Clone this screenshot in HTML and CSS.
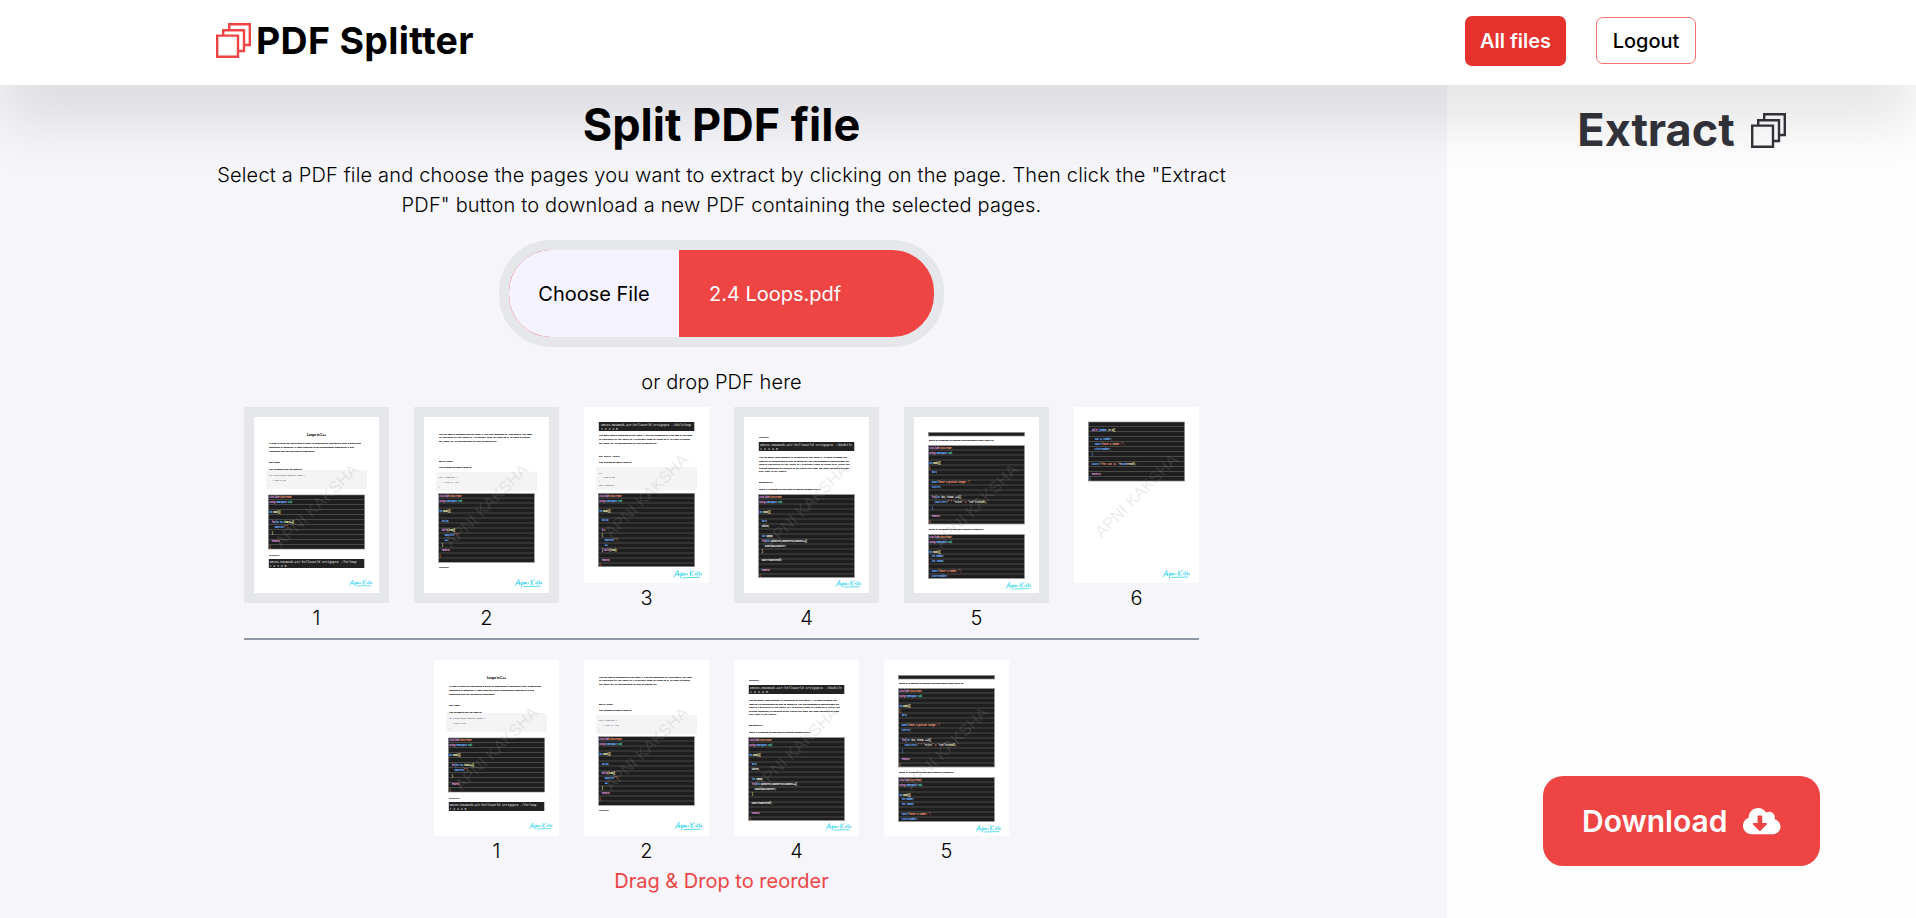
FILE: index.html
```html
<!DOCTYPE html>
<html lang="en">
<head>
<meta charset="utf-8">
<title>PDF Splitter</title>
<link rel="stylesheet" href="styles.css">
</head>
<body>
<svg class="defs" width="0" height="0" aria-hidden="true">
  <defs>
    <pattern id="rows" width="96" height="5" patternUnits="userSpaceOnUse"><rect width="96" height="5" fill="#1e1e1e"/><rect y="4" width="96" height="1" fill="#484848"/></pattern>
    <g id="head">
      <text x=".5" y="3.4" textLength="23"><tspan class="p">#include</tspan><tspan class="o">&lt;iostream&gt;</tspan></text>
      <text x=".5" y="8.4" textLength="24"><tspan class="p">using</tspan> <tspan class="b">namespace</tspan> <tspan class="g">std;</tspan></text>
      <text x=".5" y="18.4" textLength="12"><tspan class="b">int</tspan> <tspan class="y">main(){</tspan></text>
    </g>
    <g id="mark"><text class="mark" transform="translate(27.5 131.5) rotate(-45)" textLength="110">APNI KAKSHA</text></g>
    <g id="sign" class="sign"><path d="M0 7 L4 0 L5 6 M1 4 H6 M7 3 V8 M7 3 Q10 2 9 5 L7 5 M10 5 V3 M11 5 V3 Q13 3 12 5 M14 3 V5 M17 0 V6 M21 0 L17 3 L20 6 M21 4 Q23 2 23 5 M24 1 V5 M26 1 V5 L28 3 V5 M9 7.5 L27 7"/></g>
    <symbol id="page1" viewBox="0 0 125 176">
      <rect width="125" height="176" fill="#fff"/>
      <g class="doc">
        <text class="title" x="53" y="18.7" textLength="19">Loops in C++</text>
        <text x="15" y="27.2" textLength="92">A loop is used for executing a block of statements repeatedly until a particular</text>
        <text x="15" y="31" textLength="85">condition is satisfied. A loop consists of an initialization statement, a test</text>
        <text x="15" y="34.6" textLength="46">condition and an increment statement.</text>
        <text x="15" y="46" textLength="11">For Loop:</text>
        <text x="15" y="53" textLength="33">The syntax of the for loop is:</text>
      </g>
      <rect x="12" y="53" width="101" height="19" fill="#f4f4f4"/>
      <g class="snip"><text x="15" y="59.3" textLength="36">for (initialization; condition; update) {</text><text x="18" y="64.3" textLength="14">// body of loop</text><text x="15" y="68.5">}</text></g>
      <g class="code" transform="translate(14.5 78)">
        <rect width="96" height="54" fill="url(#rows)" stroke="#777" stroke-width=".6"/>
        <use href="#head"/>
        <text x="3" y="28.2" textLength="23"><tspan class="p">for</tspan><tspan class="b">(int i=1;</tspan><tspan class="y">i&lt;=5;i++){</tspan></text>
        <text x="6" y="33" textLength="14"><tspan class="b">cout&lt;&lt;i&lt;&lt;</tspan><tspan class="o">" ";</tspan></text>
        <text class="y" x="3" y="38.5">}</text><text class="p" x="3" y="47" textLength="9">return 0;</text><text class="o" x=".5" y="52.5">}</text>
      </g>
      <g class="doc"><text x="15" y="138.5" textLength="11">Output:</text></g>
      <rect x="14.8" y="142" width="95.5" height="9" fill="#222"/>
      <g class="term"><text x="15.5" y="145.9" textLength="87">URVIs-MacBook-Air:helloworld urvigupta ./forloop</text><text x="15.5" y="150" textLength="17">1 2 3 4 5</text></g>
      <use href="#mark"/><use href="#sign" transform="translate(95.5 163) scale(.8)"/>
    </symbol>
    <symbol id="page2" viewBox="0 0 125 176">
      <rect width="125" height="176" fill="#fff"/>
      <g class="doc">
        <text x="15" y="18" textLength="93">The for loop is initialised by the value 1. The test condition is i less than 5. The loop</text>
        <text x="15" y="21.3" textLength="91">is executed till the value of i is greater than or equal to 5. In each iteration</text>
        <text x="15" y="25.2" textLength="58">the value of i is incremented by one by doing i++.</text>
        <text x="15" y="45.2" textLength="14">while loop:</text>
        <text x="15" y="51.3" textLength="33">The syntax for while loop is:</text>
      </g>
      <rect x="12" y="55" width="101" height="19" fill="#f4f4f4"/>
      <g class="snip"><text x="15" y="61.3" textLength="18">while (condition) {</text><text x="18" y="66.3" textLength="17">// body of loop</text><text x="15" y="70.5">}</text></g>
      <g class="code" transform="translate(14.5 76.5)">
        <rect width="96" height="69" fill="url(#rows)" stroke="#aaa" stroke-width=".8"/>
        <use href="#head"/>
        <text class="b" x="3" y="28" textLength="8">int i=1;</text>
        <text x="3" y="37.5" textLength="14"><tspan class="p">while</tspan><tspan class="y">(i&lt;=5){</tspan></text>
        <text x="6" y="42.5" textLength="14"><tspan class="b">cout&lt;&lt;i&lt;&lt;</tspan><tspan class="o">" ";</tspan></text>
        <text class="b" x="6" y="47.5" textLength="4">i++;</text><text class="y" x="3" y="52.8">}</text><text class="p" x="3" y="57.5" textLength="9">return 0;</text><text class="o" x=".5" y="63">}</text>
      </g>
      <g class="doc"><text x="15" y="151" textLength="10">Output:</text></g>
      <use href="#mark"/><use href="#sign" transform="translate(91 162.5) scale(.95)"/>
    </symbol>
    <symbol id="page3" viewBox="0 0 125 176">
      <rect width="125" height="176" fill="#fff"/>
      <rect x="14.8" y="15" width="95.5" height="9" fill="#222"/>
      <g class="term"><text x="17" y="18.6" textLength="90">URVIs-MacBook-Air:helloworld urvigupta ./whileloop</text><text x="17" y="22.8" textLength="17">1 2 3 4 5</text></g>
      <g class="doc">
        <text x="15" y="29" textLength="93">The while loop is initialised by the value 1. The test condition is i less than 5. The loop</text>
        <text x="15" y="33" textLength="91">is executed till the value of i is greater than or equal to 5. In each iteration</text>
        <text x="15" y="36.5" textLength="58">the value of i is incremented by one by doing i++.</text>
        <text x="15" y="50.3" textLength="21">Do while loop:</text>
        <text x="15" y="56.3" textLength="33">The syntax for while loop is:</text>
      </g>
      <rect x="12" y="60" width="101" height="23" fill="#f4f4f4"/>
      <g class="snip"><text x="15" y="67" textLength="4">do {</text><text x="18" y="71" textLength="13">// body of loop</text><text x="15" y="75">}</text><text x="15" y="79" textLength="16">while (condition);</text></g>
      <g class="code" transform="translate(14.5 86.5)">
        <rect width="96" height="73" fill="url(#rows)" stroke="#777" stroke-width=".6"/>
        <use href="#head"/>
        <text class="b" x="3" y="27.5" textLength="8">int i=1;</text><text class="p" x="3" y="37.5" textLength="4">do</text><text class="y" x="3" y="42.8">{</text>
        <text x="6" y="47.5" textLength="14"><tspan class="b">cout&lt;&lt;i&lt;&lt;</tspan><tspan class="o">" ";</tspan></text>
        <text class="b" x="6" y="52.5" textLength="4">i++;</text><text x="3" y="57" textLength="16">} <tspan class="p">while</tspan><tspan class="y">(i&lt;=5);</tspan></text><text class="p" x="3" y="67" textLength="9">return 0;</text><text class="o" x=".5" y="72">}</text>
      </g>
      <use href="#mark"/><use href="#sign" transform="translate(90 163.5) scale(.97)"/>
    </symbol>
    <symbol id="page4" viewBox="0 0 125 176">
      <rect width="125" height="176" fill="#fff"/>
      <g class="doc"><text x="15" y="21" textLength="10">Output:</text></g>
      <rect x="14.8" y="25" width="95.5" height="9" fill="#222"/>
      <g class="term"><text x="16" y="28.8" textLength="92">URVIs-MacBook-Air:helloworld urvigupta ./dowhile</text><text x="16" y="32.8" textLength="18">1 2 3 4 5</text></g>
      <g class="doc">
        <text x="15" y="41" textLength="88">The do while loop variable is initialised by the value 1, in each iteration the</text>
        <text x="15" y="44.5" textLength="90">value of i is incremented by one by doing i++. The test condition is checked after the</text>
        <text x="15" y="48" textLength="91">loop is executed till the value of i is greater than or equal to 5. Since the</text>
        <text x="15" y="51.7" textLength="90">testing condition is checked at the end of the loop, the loop executes at least</text>
        <text x="15" y="55.2" textLength="28">one time in all cases.</text>
        <text x="15" y="66.2" textLength="14">Examples:</text>
        <text x="15" y="73.2" textLength="62">Ques 1: Program to find sum of natural numbers till n.</text>
      </g>
      <g class="code" transform="translate(14.5 77.5)">
        <rect width="96" height="83" fill="url(#rows)" stroke="#999" stroke-width=".8"/>
        <use href="#head"/>
        <text class="b" x="3" y="27.3" textLength="6">int n;</text><text x="3" y="32.3" textLength="8">cin&gt;&gt;n;</text><text x="3" y="42.3" textLength="12"><tspan class="b">int</tspan> sum=0;</text>
        <text x="3" y="47.3" textLength="46"><tspan class="p">for</tspan>(<tspan class="b">int</tspan> counter=1;counter&lt;=n;counter++){</text>
        <text x="6" y="52.3" textLength="22">sum=sum+counter;</text><text class="y" x="3" y="57.8">}</text><text x="3" y="66.3" textLength="21">cout&lt;&lt;sum&lt;&lt;endl;</text><text class="p" x="3" y="76.3" textLength="9">return 0;</text><text class="o" x=".5" y="82">}</text>
      </g>
      <use href="#mark"/><use href="#sign" transform="translate(92 163.5) scale(.88)"/>
    </symbol>
    <symbol id="page5" viewBox="0 0 125 176">
      <rect width="125" height="176" fill="#fff"/>
      <rect x="14.5" y="15.5" width="96" height="3.5" fill="#1e1e1e" stroke="#888" stroke-width=".7"/>
      <g class="doc"><text x="15" y="24.2" textLength="65">Ques 2: Program to display multiplication table upto 10.</text><text x="15" y="113.2" textLength="55">Ques 3: Program to add only positive numbers.</text></g>
      <g class="code" transform="translate(14.5 28.5)">
        <rect width="96" height="78.5" fill="url(#rows)" stroke="#999" stroke-width=".8"/>
        <use href="#head"/>
        <text class="o" x=".5" y="23.5">{</text><text class="b" x="3" y="27" textLength="6">int n;</text>
        <text x="3" y="37.3" textLength="39"><tspan class="b">cout&lt;&lt;</tspan><tspan class="o">"Enter a positive integer: ";</tspan></text><text class="b" x="3" y="42.3" textLength="10">cin&gt;&gt;n;</text>
        <text x="3" y="52.3" textLength="30"><tspan class="p">for</tspan>(<tspan class="b">int</tspan> i=1; i&lt;=10; ++i){</text><text x="6" y="57.3" textLength="52"><tspan class="b">cout&lt;&lt;n&lt;&lt;</tspan><tspan class="o">" * "</tspan>&lt;&lt;i&lt;&lt;<tspan class="o">" = "</tspan>&lt;&lt;n*i&lt;&lt;<tspan class="y">endl;</tspan></text>
        <text class="b" x="3" y="63">}</text><text class="p" x="3" y="71.3" textLength="9">return 0;</text><text class="o" x=".5" y="77.3">}</text>
      </g>
      <g class="code" transform="translate(14.5 117.5)">
        <rect width="96" height="44" fill="url(#rows)" stroke="#999" stroke-width=".8"/>
        <use href="#head"/>
        <text class="b" x="3" y="22.3" textLength="13">int number;</text><text class="b" x="3" y="27.3" textLength="13">int sum=0;</text>
        <text x="3" y="37.3" textLength="30"><tspan class="b">cout&lt;&lt;</tspan><tspan class="o">"Enter a number: ";</tspan></text><text class="b" x="3" y="42.3" textLength="17">cin&gt;&gt;number;</text>
      </g>
      <use href="#mark"/><use href="#sign" transform="translate(92 165.5) scale(.87)"/>
    </symbol>
    <symbol id="page6" viewBox="0 0 125 176">
      <rect width="125" height="176" fill="#fff"/>
      <g class="code" transform="translate(14.5 15)">
        <rect width="96" height="59" fill="url(#rows)" stroke="#888" stroke-width=".7"/>
        <text x="3" y="8.8" textLength="24"><tspan class="p">while</tspan> <tspan class="b">(number</tspan> <tspan class="y">&gt;= 0){</tspan></text>
        <text class="b" x="6" y="17.5" textLength="18">sum += number;</text>
        <text x="6" y="22.5" textLength="30"><tspan class="b">cout&lt;&lt;</tspan><tspan class="o">"Enter a number: ";</tspan></text>
        <text class="b" x="6" y="27.5" textLength="17">cin&gt;&gt;number;</text><text class="b" x="3" y="33">}</text>
        <text x="3" y="42.5" textLength="45"><tspan class="b">cout&lt;&lt;</tspan><tspan class="o">"The sum is "</tspan>&lt;&lt;<tspan class="b">sum</tspan>&lt;&lt;<tspan class="y">endl;</tspan></text>
        <text class="p" x="3" y="52.5" textLength="10">return 0;</text><text class="b" x=".5" y="57.5">}</text>
      </g>
      <use href="#mark"/><use href="#sign" transform="translate(89 163.5) scale(.93)"/>
    </symbol>
    <symbol id="stack" viewBox="0 0 35 35"><path fill="none" stroke="currentColor" stroke-width="2.4" d="M1.2 12.6H22V33.8H1.2ZM7.2 12V7.2H28V28H23M13.2 6V1.2H33.8V22H29"/></symbol>
  </defs>
</svg>

<header class="navbar">
  <div class="brand"><svg class="stack"><use href="#stack"/></svg><span>PDF Splitter</span></div>
  <nav class="actions"><a class="btn btn-solid">All files</a><a class="btn btn-line">Logout</a></nav>
</header>

<div class="layout">
  <main class="workspace">
    <h1>Split PDF file</h1>
    <p class="intro">Select a PDF file and choose the pages you want to extract by clicking on the page. Then click the "Extract<br>PDF" button to download a new PDF containing the selected pages.</p>
    <div class="picker"><span class="picker-btn">Choose File</span><span class="picker-name">2.4 Loops.pdf</span></div>
    <p class="hint">or drop PDF here</p>
    <section class="pages all">
      <figure><svg class="thumb chosen"><use href="#page1"/></svg><figcaption>1</figcaption></figure>
      <figure><svg class="thumb chosen"><use href="#page2"/></svg><figcaption>2</figcaption></figure>
      <figure><svg class="thumb"><use href="#page3"/></svg><figcaption>3</figcaption></figure>
      <figure><svg class="thumb chosen"><use href="#page4"/></svg><figcaption>4</figcaption></figure>
      <figure><svg class="thumb chosen"><use href="#page5"/></svg><figcaption>5</figcaption></figure>
      <figure><svg class="thumb"><use href="#page6"/></svg><figcaption>6</figcaption></figure>
    </section>
    <section class="pages selected">
      <figure><svg class="thumb"><use href="#page1"/></svg><figcaption>1</figcaption></figure>
      <figure><svg class="thumb"><use href="#page2"/></svg><figcaption>2</figcaption></figure>
      <figure><svg class="thumb"><use href="#page4"/></svg><figcaption>4</figcaption></figure>
      <figure><svg class="thumb"><use href="#page5"/></svg><figcaption>5</figcaption></figure>
    </section>
    <p class="reorder">Drag &amp; Drop to reorder</p>
  </main>
  <aside class="sidebar">
    <h2><span>Extract</span><svg class="stack"><use href="#stack"/></svg></h2>
    <button class="download"><span>Download</span>
      <svg class="cloud" viewBox="0 0 640 512"><path fill="currentColor" d="M537.6 226.6c4.1-10.7 6.4-22.4 6.4-34.6 0-53-43-96-96-96-19.7 0-38.1 6-53.3 16.2C367 64.2 315.3 32 256 32c-88.4 0-160 71.6-160 160 0 2.7.1 5.4.2 8.1C40.2 219.8 0 273.2 0 336c0 79.5 64.5 144 144 144h368c70.7 0 128-57.3 128-128 0-61.9-44-113.6-102.4-125.4zm-132.9 88.7L299.3 420.7c-6.2 6.2-16.4 6.2-22.6 0L171.3 315.3c-10.1-10.1-2.9-27.3 11.3-27.3H248V176c0-8.8 7.2-16 16-16h48c8.8 0 16 7.2 16 16v112h65.4c14.2 0 21.4 17.2 11.3 27.3z"/></svg>
    </button>
  </aside>
</div>
</body>
</html>
```
FILE: styles.css
```css
* { box-sizing: border-box; margin: 0; padding: 0; }
body { height: 918px; overflow: hidden; display: flex; flex-direction: column; font-family: Inter, sans-serif; font-size: 20px; line-height: 30px; color: #000; background: #fefefe; }
.defs { position: absolute; }
svg { display: block; }
.stack { width: 35px; height: 35px; flex: none; }

.navbar { position: relative; z-index: 1; flex: none; height: 85px; padding: 0 220px 4px 216px; display: flex; align-items: center; justify-content: space-between; background: #fff; box-shadow: 0 38px 58px 0 rgba(0, 0, 0, .1); }
.brand { display: flex; align-items: center; gap: 5px; color: #ef4444; font-size: 37.5px; font-weight: 700; letter-spacing: .3px; }
.brand span { color: #000; }
.actions { display: flex; align-items: center; gap: 30px; }
.btn { display: flex; align-items: center; justify-content: center; border-radius: 7px; }
.btn-solid { width: 101px; height: 50px; color: #fff; font-weight: 600; background: #e5322d; }
.btn-line { width: 100px; height: 47px; font-weight: 500; border: 1px solid #f87171; }

.layout { flex: 1; display: flex; }
.workspace { width: 1447px; padding-right: 4px; display: flex; flex-direction: column; align-items: center; background: #f5f5fa; }
h1 { margin-top: 10px; font-size: 45px; line-height: 60px; font-weight: 700; }
.intro { margin-top: 5px; text-align: center; font-weight: 300; letter-spacing: .18px; white-space: nowrap; }
.picker { margin-top: 20px; width: 445px; height: 107px; display: flex; overflow: hidden; border: 10px solid #e5e7eb; border-radius: 52px; background: #ef4444; }
.picker-btn { width: 170px; display: flex; align-items: center; justify-content: center; background: #f5f3ff; }
.picker-name { padding-left: 30px; display: flex; align-items: center; color: #fff; }
.hint { margin-top: 20px; font-weight: 300; letter-spacing: .08px; }
.pages { display: flex; align-items: flex-start; justify-content: center; gap: 25px; }
.all { width: 955px; height: 233px; margin-top: 10px; border-bottom: 2px solid #9097a4; }
.selected { margin-top: 20px; }
figcaption { text-align: center; font-weight: 300; }
.thumb { width: 125px; height: 176px; }
.chosen { width: 145px; height: 196px; border: 10px solid #e5e7eb; }
.reorder { color: #ef4444; }

.sidebar { flex: 1; padding: 15px 0 52px; display: flex; flex-direction: column; align-items: center; justify-content: space-between; }
h2 { display: flex; align-items: center; gap: 16px; font-size: 45px; line-height: 60px; font-weight: 700; color: #33333b; }
.download { width: 277px; height: 90px; display: flex; align-items: center; justify-content: center; gap: 16px; border: 0; border-radius: 20px; background: #ef4444; color: #fff; font: 600 30px Inter, sans-serif; }
.cloud { width: 37.5px; height: 30px; }

.doc { font: 700 2.4px "Liberation Sans", sans-serif; fill: #000; stroke: #000; stroke-width: .08; }
.title { font-size: 3px; }
.snip { font: 400 2.1px "Liberation Mono", monospace; fill: #5b4668; }
.code { font: 700 2.9px "Liberation Mono", monospace; fill: #e4e4e4; }
.term { font: 700 3.2px "Liberation Mono", monospace; fill: #bbb; }
.p { fill: #d993d3; }
.o { fill: #e08e6c; }
.b { fill: #6db0ff; }
.g { fill: #4ed9bb; }
.y { fill: #f0f0bb; }
.mark { font: 400 16.5px "Liberation Sans", sans-serif; fill: #969696; fill-opacity: .2; }
.sign path { fill: none; stroke: #25cfee; stroke-width: .8; }
```
